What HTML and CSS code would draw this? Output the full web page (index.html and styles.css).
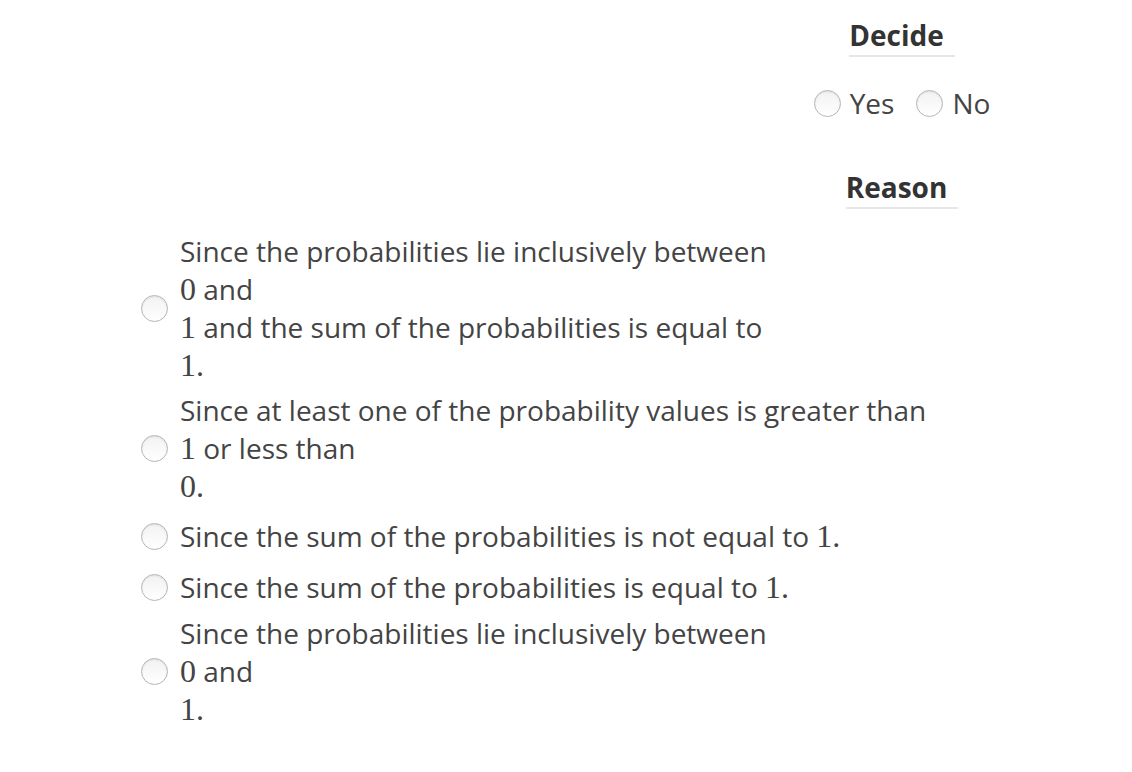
FILE: index.html
```html
<!DOCTYPE html>
<html>
<head>
<meta charset="utf-8">
<link rel="stylesheet" href="styles.css">
</head>
<body>
<div class="page">
  <div class="head-col">
    <div class="heading"><span class="heading-text">Decide</span></div>
    <div class="yesno">
      <label class="choice"><span class="radio"></span><span>Yes</span></label>
      <label class="choice"><span class="radio"></span><span>No</span></label>
    </div>
    <div class="heading reason"><span class="heading-text">Reason</span></div>
  </div>
  <div class="options">
    <div class="option">
      <span class="radio"></span>
      <div class="opt-text">
        <div class="line">Since the probabilities lie inclusively between</div>
        <div class="line"><span class="m">0</span> and</div>
        <div class="line"><span class="m">1</span> and the sum of the probabilities is equal to</div>
        <div class="line"><span class="m">1.</span></div>
      </div>
    </div>
    <div class="option">
      <span class="radio"></span>
      <div class="opt-text">
        <div class="line">Since at least one of the probability values is greater than</div>
        <div class="line"><span class="m">1</span> or less than</div>
        <div class="line"><span class="m">0.</span></div>
      </div>
    </div>
    <div class="option single">
      <span class="radio"></span>
      <div class="opt-text">
        <div class="line">Since the sum of the probabilities is not equal to <span class="m">1.</span></div>
      </div>
    </div>
    <div class="option single">
      <span class="radio"></span>
      <div class="opt-text">
        <div class="line">Since the sum of the probabilities is equal to <span class="m">1.</span></div>
      </div>
    </div>
    <div class="option">
      <span class="radio"></span>
      <div class="opt-text">
        <div class="line">Since the probabilities lie inclusively between</div>
        <div class="line"><span class="m">0</span> and</div>
        <div class="line"><span class="m">1.</span></div>
      </div>
    </div>
  </div>
</div>
</body>
</html>
```

FILE: styles.css
```css
html, body {
  margin: 0;
  padding: 0;
  background: #ffffff;
}
body {
  font-family: "Open Sans", "Liberation Sans", sans-serif;
  color: #444444;
}
.page {
  padding-top: 16px;
}
.head-col {
  width: 240px;
  margin-left: 782px;
  display: flex;
  flex-direction: column;
  align-items: center;
}
.heading {
  font-weight: 700;
  font-size: 28px;
  line-height: 38px;
  color: #333333;
}
.heading-text {
  display: inline-block;
  padding-right: 11px;
  border-bottom: 2px solid #e6e6e6;
  padding-bottom: 1px;
}
.reason {
  margin-top: 46px;
}
.yesno {
  display: flex;
  gap: 22px;
  margin-top: 27px;
  font-size: 28px;
  line-height: 38px;
}
.choice {
  display: flex;
  align-items: center;
  gap: 9px;
}
.radio {
  width: 27px;
  height: 27px;
  box-sizing: border-box;
  border-radius: 50%;
  border: 1px solid #b5b5b5;
  background: linear-gradient(#f2f2f2, #ffffff);
  box-shadow: inset 0 1px 2px rgba(0,0,0,0.08);
  flex: none;
}
.options {
  margin-top: 23px;
  padding-left: 141px;
  display: flex;
  flex-direction: column;
  gap: 7px;
}
.option {
  display: flex;
  align-items: center;
  gap: 12px;
}
.option.single {
  padding: 5px 0 1px;
}
.opt-text {
  font-size: 28px;
}
.line {
  height: 38px;
  line-height: 38px;
  white-space: nowrap;
}
.m {
  font-family: "Liberation Serif", "Times New Roman", serif;
  font-size: 32px;
  line-height: 1;
}
```
